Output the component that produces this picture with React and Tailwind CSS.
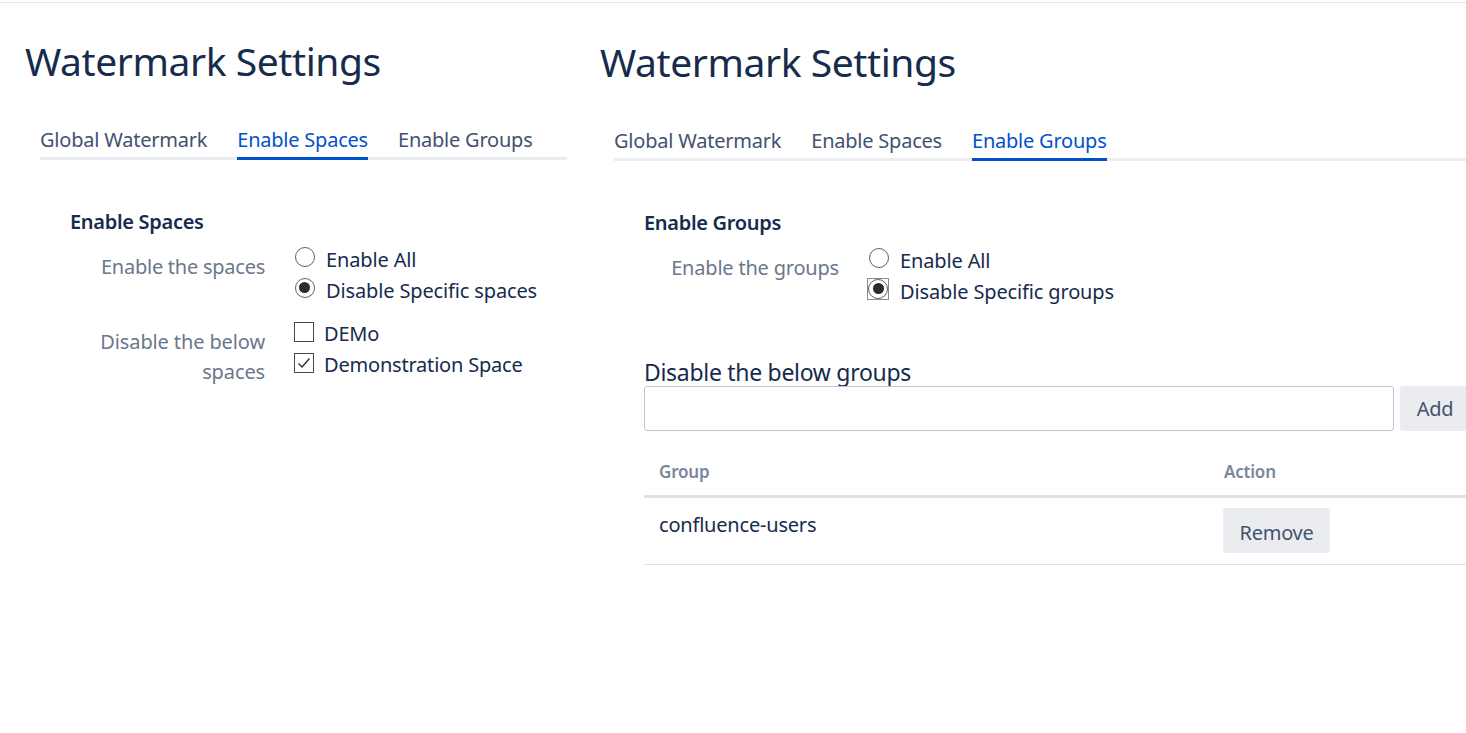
function Radio({ checked, focus }) {
  return (
    <span className={`mb-[4px] flex shrink-0 items-center justify-center ${focus ? "-ml-[1px] h-[22px] w-[22px] border border-[#8a8a8a]" : "h-[21px] w-[21px]"}`}>
      <span className="flex h-[20px] w-[20px] shrink-0 items-center justify-center rounded-full border border-[#5f5f5f] bg-white">
        {checked && <span className="h-[11px] w-[11px] rounded-full bg-[#2b2b2b]" />}
      </span>
    </span>
  );
}
function Check({ checked }) {
  return (
    <span className="mb-[4px] flex h-[20px] w-[20px] shrink-0 items-center justify-center border border-[#4a4a4a] bg-white">
      {checked && (
        <svg width="14" height="12" viewBox="0 0 14 12" fill="none" stroke="#2b2b2b" strokeWidth="1.3">
          <path d="M1.5 6.5 L5 10 L12.5 1.5" />
        </svg>
      )}
    </span>
  );
}
function Tabs({ active }) {
  const items = ["Global Watermark", "Enable Spaces", "Enable Groups"];
  return (
    <div className="flex gap-[30px] border-b-[3px] border-[#ebecf0] text-[20px] leading-[28px] tracking-[-0.22px]">
      {items.map((t) => (
        <div key={t} className={`-mb-[3px] h-[34px] border-b-[3px] ${t === active ? "border-[#0052cc] text-[#0052cc]" : "border-transparent text-[#42526e]"}`}>
          {t}
        </div>
      ))}
    </div>
  );
}
function Title() {
  return <h1 className="text-[39px] leading-[48px] font-normal text-[#172b4d] tracking-[-0.42px]">Watermark Settings</h1>;
}
function RadioRow({ label, checked, focus }) {
  return (
    <div className="flex h-[31px] items-center gap-[11px] text-[20px] tracking-[-0.14px] text-[#172b4d]">
      <Radio checked={checked} focus={focus} />
      <span className="pt-[2px]">{label}</span>
    </div>
  );
}
function CheckRow({ label, checked }) {
  return (
    <div className="flex h-[31px] items-center gap-[10px] text-[20px] tracking-[-0.2px] text-[#172b4d]">
      <Check checked={checked} />
      <span>{label}</span>
    </div>
  );
}
export default function App() {
  return (
    <div className="h-[733px] w-[1466px] overflow-hidden bg-white pt-[2px] text-[#172b4d]" style={{ fontFamily: '"Noto Sans", "Open Sans", sans-serif' }}>
      <div className="flex h-[731px] border-t border-[#e4e5e9]">
        <section className="w-[574px] shrink-0 pt-[34px] pl-[25px]">
          <Title />
          <div className="mt-[41px] ml-[15px] w-[527px]">
            <Tabs active="Enable Spaces" />
          </div>
          <div className="mt-[48px] ml-[45px]">
            <h2 className="text-[20px] leading-[28px] font-semibold tracking-[-0.3px]">Enable Spaces</h2>
            <div className="mt-[7px] flex">
              <div className="w-[195px] pt-[9px] text-right text-[20px] leading-[30px] tracking-[-0.25px] text-[#6b778c]">Enable the spaces</div>
              <div className="ml-[29px]">
                <RadioRow label="Enable All" />
                <RadioRow label="Disable Specific spaces" checked />
              </div>
            </div>
            <div className="mt-[13px] flex">
              <div className="w-[195px] pt-[9px] text-right text-[20px] leading-[30px] tracking-[-0.12px] text-[#6b778c]">Disable the below spaces</div>
              <div className="ml-[29px]">
                <CheckRow label="DEMo" />
                <CheckRow label="Demonstration Space" checked />
              </div>
            </div>
          </div>
        </section>
        <section className="w-[892px] shrink-0 pt-[35px] pl-[26px]">
          <Title />
          <div className="mt-[41px] ml-[14px] w-[900px]">
            <Tabs active="Enable Groups" />
          </div>
          <div className="mt-[48px] ml-[44px]">
            <h2 className="text-[20px] leading-[28px] font-semibold tracking-[-0.3px]">Enable Groups</h2>
            <div className="mt-[7px] flex">
              <div className="w-[195px] pt-[9px] text-right text-[20px] leading-[30px] tracking-[-0.2px] text-[#6b778c]">Enable the groups</div>
              <div className="ml-[29px]">
                <RadioRow label="Enable All" />
                <RadioRow label="Disable Specific groups" checked focus />
              </div>
            </div>
            <div className="mt-[53px] text-[23px] leading-[27px] tracking-[-0.3px]">Disable the below groups</div>
            <div className="flex gap-[6px]">
              <div className="h-[45px] w-[750px] shrink-0 rounded-[3px] border border-[#c1c7d0] bg-white" />
              <button className="h-[45px] w-[80px] shrink-0 rounded-[3px] bg-[#ebecf0] pr-[12px] pl-[2px] text-[20px] tracking-[-0.3px] text-[#42526e]">Add</button>
            </div>
            <table className="mt-[24px] w-[900px] table-fixed border-collapse">
              <thead>
                <tr className="border-b-[3px] border-[#dfe1e6]">
                  <th className="h-[41px] w-[579px] px-[15px] pb-[7px] text-left text-[17px] font-semibold tracking-[-0.2px] text-[#7a869a]">Group</th>
                  <th className="h-[41px] pr-0 pb-[7px] pl-[1px] text-left text-[17px] font-semibold tracking-[-0.2px] text-[#7a869a]">Action</th>
                </tr>
              </thead>
              <tbody>
                <tr className="border-b border-[#dfe1e6]">
                  <td className="h-[68px] px-[15px] pb-[12px] text-[20px] tracking-[-0.2px]">confluence-users</td>
                  <td className="h-[68px]">
                    <button className="h-[45px] w-[107px] rounded-[3px] bg-[#ebecf0] pt-[5px] text-[20px] tracking-[-0.3px] text-[#42526e]">Remove</button>
                  </td>
                </tr>
              </tbody>
            </table>
          </div>
        </section>
      </div>
    </div>
  );
}
